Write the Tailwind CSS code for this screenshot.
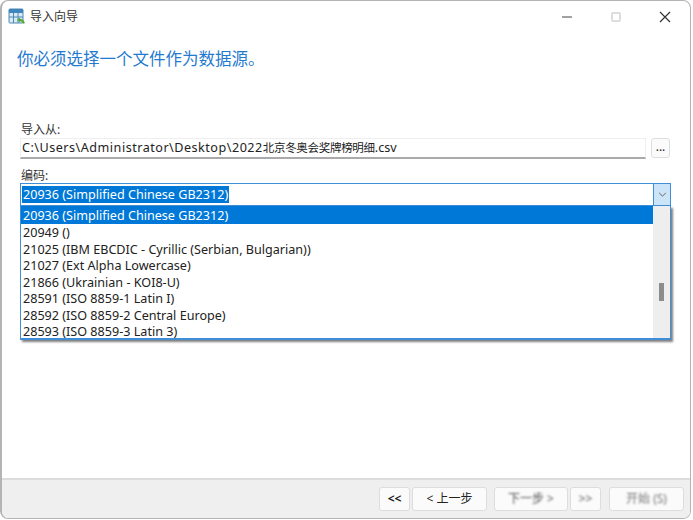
<!DOCTYPE html>
<html lang="zh">
<head>
    <meta charset="UTF-8">
    <title>导入向导</title>
    <script src="https://cdn.jsdelivr.net/npm/@tailwindcss/browser@4"></script>
</head>
<body class="bg-white w-[693px] h-[520px] overflow-hidden font-['Noto_Sans','Noto_Sans_CJK_SC',sans-serif] text-[#222]">
    <div class="w-[691px] h-[519px] flex flex-col bg-white border border-[#b4b4b4] border-l-2 rounded-lg overflow-hidden">
        <!-- Title bar -->
        <div class="h-[32px] shrink-0 flex items-center pl-[6px]">
            <svg width="18" height="18" viewBox="0 0 18 18" class="mr-[4px]">
                <rect x="1" y="1" width="14" height="14" rx="1" fill="#dbe9f5" stroke="#4a88b8"/>
                <rect x="1" y="1" width="14" height="4" fill="#3f86bd"/>
                <path d="M1 9h14M5.500 5v10M10 5v10" stroke="#4a88b8"/>
                <path d="M16 15.500c-1-3-3-4-5.500-3.500" fill="none" stroke="#5aa83c" stroke-width="2"/>
                <path d="M9 12l3-2.500v5z" fill="#5aa83c"/>
            </svg>
            <span class="text-[12px] text-[#333]">导入向导</span>
            <div class="ml-auto flex items-center">
                <svg width="12" height="12" viewBox="0 0 12 12" class="mr-[38px]"><path d="M1 6h10" stroke="#444"/></svg>
                <div class="w-[10px] h-[10px] border-2 border-[#ddd] rounded-[2px] mr-[38px]"></div>
                <svg width="12" height="12" viewBox="0 0 12 12" class="mr-[19px]"><path d="M1 1l10 10M11 1L1 11" stroke="#333" stroke-width="1.200"/></svg>
            </div>
        </div>

        <!-- Content -->
        <div class="flex-1 pl-[14px] pr-[20px] relative">
            <h1 class="text-[16.500px] leading-[24px] mt-[14px] ml-[1px] text-[#1f7ad0] font-normal">你必须选择一个文件作为数据源。</h1>

            <div class="pl-[4px] mt-[51px]">
                <div class="text-[12px] leading-[16px] text-[#333] ml-[1px]">导入从:</div>
                <div class="flex items-start gap-[5px]">
                    <div class="w-[627px] h-[21px] flex items-center pl-[1px] text-[12.600px] whitespace-nowrap border border-[#eee] border-b-2 border-b-[#aaa] bg-white"><span class="tracking-[0.5px]">C:\Users\Administrator\Desktop\2022</span><span class="text-[11.500px] tracking-[-0.3px]">北京冬奥会奖牌榜明细</span><span>.csv</span></div>
                    <div class="w-[19px] h-[20px] flex items-center justify-center text-[12px] leading-none border border-[#ddd] rounded-[3px] bg-[#fbfbfb] pb-[3px]">...</div>
                </div>

                <div class="text-[12px] leading-[16px] text-[#333] mt-[9px] ml-[1px]">编码:</div>
                <div class="relative w-[651px] mt-[-1px]">
                    <div class="h-[23px] flex items-center pl-[1px] border border-[#3f8fd8] bg-white">
                        <span class="bg-[#0078d7] text-white text-[12.600px] leading-[17px] px-[1px]">20936 (Simplified Chinese GB2312)</span>
                        <div class="ml-auto w-[17px] h-[21px] flex items-center justify-center bg-[#cce4f7] border-l border-[#3f8fd8]">
                            <svg width="9" height="5" viewBox="0 0 10 6"><path d="M1 1l4 4 4-4" fill="none" stroke="#666" stroke-width="1.200"/></svg>
                        </div>
                    </div>

                    <!-- Open dropdown -->
                    <div class="absolute left-0 top-[23px] w-[651px] h-[134px] flex bg-white border border-t-0 border-[#3f8fd8] border-b-2 shadow-[2px_2px_2px_rgba(0,0,0,0.5)] z-10">
                        <div class="flex-1 text-[12.600px] leading-[16.500px] whitespace-nowrap">
                            <div class="bg-[#0078d7] text-white pl-[2px] h-[18px] leading-[19px]">20936 (Simplified Chinese GB2312)</div>
                            <div class="pl-[2px] pt-[1px] h-[16.500px]">20949 ()</div>
                            <div class="pl-[2px] pt-[1px] h-[16.500px]">21025 (IBM EBCDIC - Cyrillic (Serbian, Bulgarian))</div>
                            <div class="pl-[2px] pt-[1px] h-[16.500px]">21027 (Ext Alpha Lowercase)</div>
                            <div class="pl-[2px] pt-[1px] h-[16.500px]">21866 (Ukrainian - KOI8-U)</div>
                            <div class="pl-[2px] pt-[1px] h-[16.500px]">28591 (ISO 8859-1 Latin I)</div>
                            <div class="pl-[2px] pt-[1px] h-[16.500px]">28592 (ISO 8859-2 Central Europe)</div>
                            <div class="pl-[2px] pt-[1px] h-[16.500px]">28593 (ISO 8859-3 Latin 3)</div>
                        </div>
                        <div class="w-[17px] bg-[#eeeeee] relative">
                            <div class="absolute left-[6px] top-[77px] w-[5px] h-[18px] bg-[#8c8c8c]"></div>
                        </div>
                    </div>
                </div>
            </div>
        </div>

        <!-- Footer -->
        <div class="h-[40px] shrink-0 bg-[#efefef] border-t-2 border-[#dcdcdc] flex items-start pt-[7px] pl-[377px] text-[12px]">
            <div class="w-[31px] h-[24px] flex items-center justify-center bg-[#fbfbfb] border border-[#ddd] rounded-[3px] font-bold">&lt;&lt;</div>
            <div class="w-[75px] h-[24px] ml-[2px] flex items-center justify-center bg-[#fbfbfb] border border-[#ddd] rounded-[3px]">&lt; 上一步</div>
            <div class="w-[74px] h-[24px] ml-[7px] flex items-center justify-center bg-[#fbfbfb] border border-[#ddd] rounded-[3px]"><span class="blur-[1px] text-[#555]">下一步 &gt;</span></div>
            <div class="w-[31px] h-[24px] ml-[2px] flex items-center justify-center bg-[#fbfbfb] border border-[#ddd] rounded-[3px]"><span class="blur-[1px] text-[#555]">&gt;&gt;</span></div>
            <div class="w-[75px] h-[24px] ml-[8px] flex items-center justify-center bg-[#fbfbfb] border border-[#ddd] rounded-[3px]"><span class="blur-[1px] text-[#777]">开始 (S)</span></div>
        </div>
    </div>
</body>
</html>
